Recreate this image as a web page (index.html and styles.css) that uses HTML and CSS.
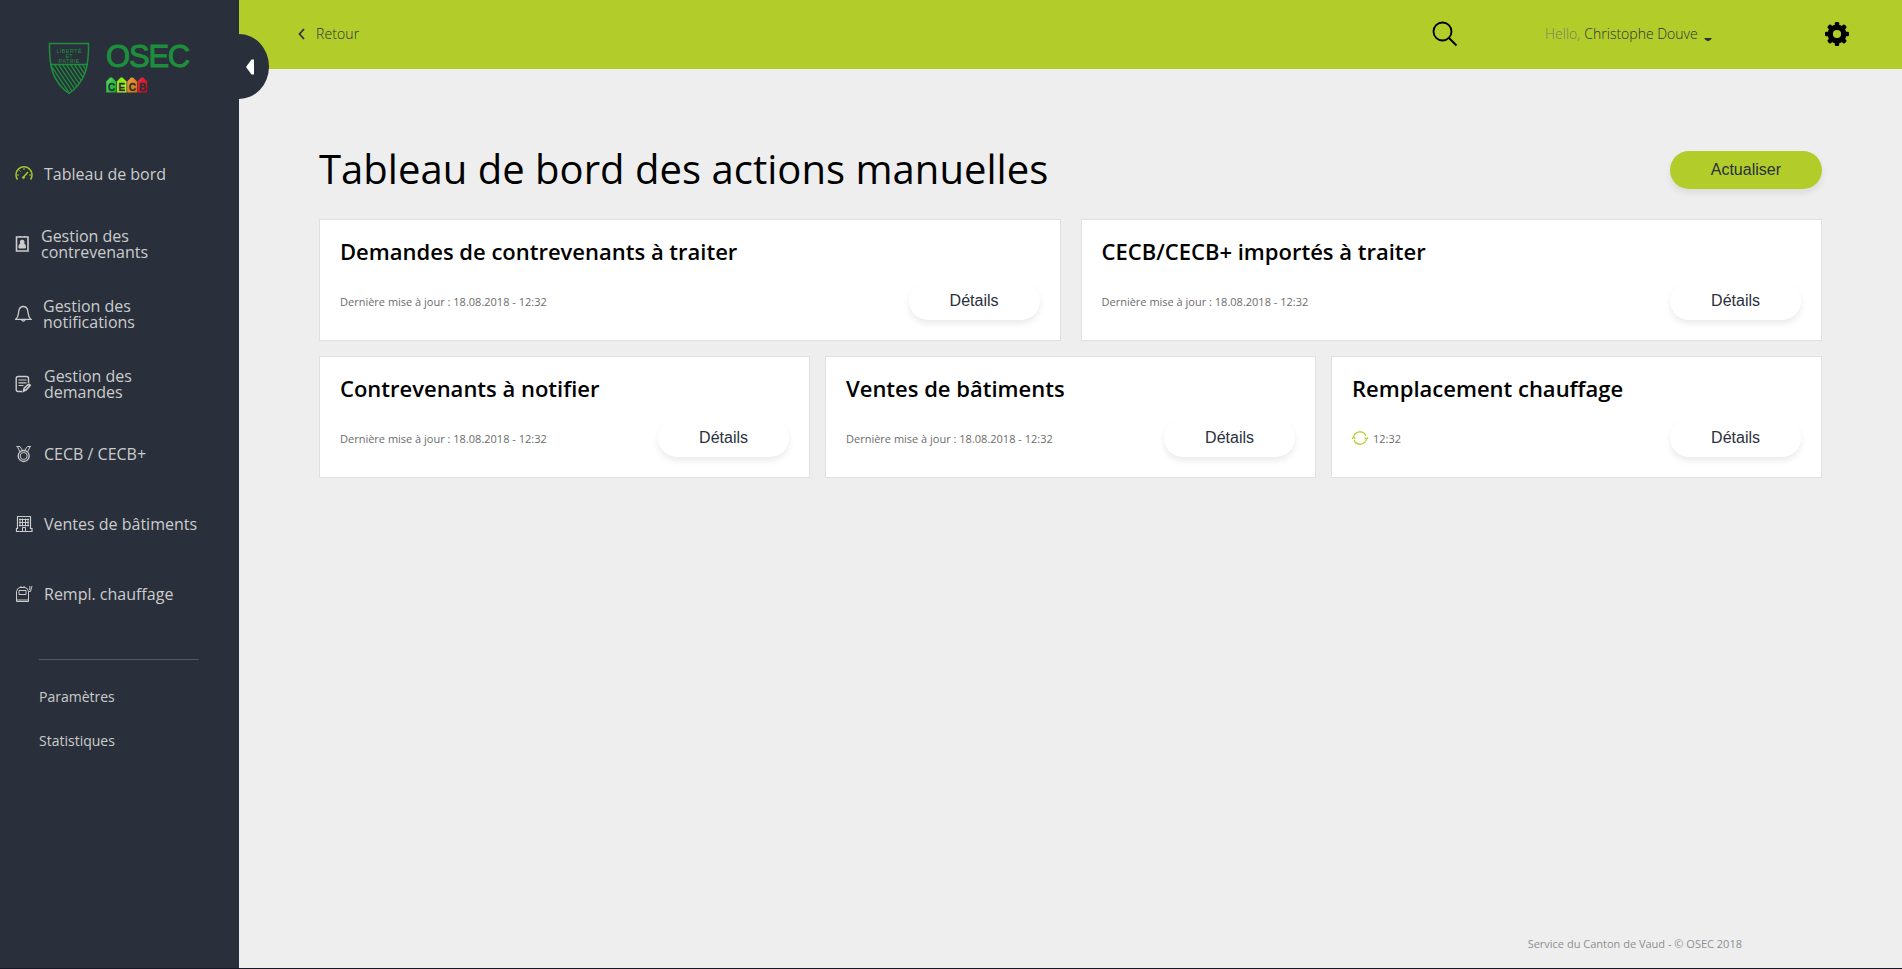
FILE: index.html
```html
<!DOCTYPE html>
<html lang="fr">
<head>
<meta charset="utf-8">
<title>OSEC - Tableau de bord</title>
<link rel="stylesheet" href="styles.css">
</head>
<body>
<div class="app">
  <aside class="sidebar">
    <div class="logo">
      <svg class="shield" width="42" height="54" viewBox="0 0 42 54">
        <defs><clipPath id="low"><path d="M2 22.500H40C38 35 31 44 21 51C11 44 4 35 2 22.500Z"/></clipPath></defs>
        <path d="M1.500 1.500H40.500C41 25 37 40 21 51.500C5 40 1 25 1.500 1.500ZM2 22.500H40" fill="none" stroke="#1d8f3c" stroke-width="1.500"/>
        <g clip-path="url(#low)" stroke="#1d8f3c" stroke-width="1.300"><path d="M-18 22l20 30M-14 22l20 30M-10 22l20 30M-6 22l20 30M-2 22l20 30M2 22l20 30M6 22l20 30M10 22l20 30M14 22l20 30M18 22l20 30M22 22l20 30M26 22l20 30M30 22l20 30M34 22l20 30"/></g>
        <g class="motto"><text x="21" y="10.500" textLength="25">LIBERTÉ</text><text x="21" y="15.500">ET</text><text x="21" y="20.500" textLength="21">PATRIE</text></g>
      </svg>
      <div class="brand">
        <div class="brand-name">OSEC</div>
        <svg class="cecb" width="42" height="16" viewBox="0 0 42 16">
          <defs>
            <linearGradient id="g1" x2="1" y2="1"><stop stop-color="#55e05f"/><stop offset="1" stop-color="#0da72b"/></linearGradient>
            <linearGradient id="g2" x2="1" y2="1"><stop stop-color="#79e413"/><stop offset="1" stop-color="#c5f42b"/></linearGradient>
            <linearGradient id="g3" x2="1" y2="1"><stop stop-color="#f0a044"/><stop offset="1" stop-color="#cc7100"/></linearGradient>
            <linearGradient id="g4" x2="1" y2="1"><stop stop-color="#f02b4b"/><stop offset="1" stop-color="#c20b12"/></linearGradient>
          </defs>
          <path fill="url(#g1)" d="M.3 15.500V4.500L4 .5h2l4 4v11z"/><path fill="url(#g2)" d="M10.800 15.500V4.500L14.500.5h2l4 4v11z"/><path fill="url(#g3)" d="M21.200 15.500V4.500L25 .5h2l4 4v11z"/><path fill="url(#g4)" d="M31.500 15.500V4.500L35.200.5h2l4 4v11z"/>
          <g class="cecb-text"><text x="5.500" y="14">C</text><text x="15.800" y="14">E</text><text x="26.300" y="14">C</text><text x="36.500" y="14">B</text></g>
        </svg>
      </div>
    </div>
    <nav class="menu">
      <a class="item active"><svg width="18" height="18" viewBox="0 0 18 18" fill="none" stroke="currentColor"><path d="M2.500 14.500A8 8 0 1 1 15.500 14.500" stroke-width="1.500"/><path d="M2 10h2M14 10h2M4.500 5.500l1 1M9 3v2" /><path d="M8.500 12l4.500-5" stroke-width="1.600"/><circle cx="8.500" cy="12.500" r="1" fill="currentColor"/></svg><span>Tableau de bord</span></a>
      <a class="item id"><svg width="15" height="18" viewBox="0 0 15 18" fill="none" stroke="currentColor"><path d="M1.500 2h11.500v14H1.500z" stroke-width="1.600"/><path d="M4 1.500h2M8.500 1.500h2"/><circle cx="7.200" cy="7" r="1.900" fill="currentColor"/><path d="M4 13c-.3-4 1-4.500 3.200-4.500s3.500.5 3.200 4.500z" fill="currentColor"/></svg><span>Gestion des contrevenants</span></a>
      <a class="item bell"><svg width="17" height="18" viewBox="0 0 17 18" fill="none" stroke="currentColor" stroke-width="1.300"><path d="M.8 14.300h15C13 12 13.500 10 12.800 6c-.5-3-2-4.500-4.500-4.500S4.300 3 3.800 6C3.100 10 3.600 12 .8 14.300zM6.500 14.500c.2 2 3.400 2 3.600 0"/></svg><span>Gestion des notifications</span></a>
      <a class="item doc"><svg width="18" height="18" viewBox="0 0 18 18" fill="none" stroke="currentColor"><path d="M7 16.500H3Q1.200 16.500 1.200 14.500V3.500Q1.200 1.500 3 1.500h8.500Q13.500 1.500 13.500 3.500V8" stroke-width="1.400"/><path d="M3.500 5h8M3.500 7.800h8M3.500 10.500h5" stroke-width="1.200"/><path d="M8.500 16.200l.7-3 4-3.700q1.300-.5 2 .8l-4 4.500z" stroke-width="1.700"/></svg><span>Gestion des demandes</span></a>
      <a class="item"><svg width="18" height="18" viewBox="0 0 18 18" fill="none" stroke="currentColor"><circle cx="8.700" cy="11" r="5.500" stroke-width="1.300"/><circle cx="8.700" cy="11" r="3.500"/><path d="M1.500 1.500H5L7.500 5.500M2.300 1.500L5 7M16 1.500H12.500L9 6M15.200 1.500L12.500 7"/></svg><span>CECB / CECB+</span></a>
      <a class="item"><svg width="18" height="18" viewBox="0 0 18 18" fill="none" stroke="currentColor"><path d="M2 1.500h14M2.500 1.500v12h-1v3h15.500v-3H15.500V1.500" stroke-width="1.200"/><path d="M5 3.500v8M7.500 3.500v8M10.500 3.500v8M13 3.500v8M4 4.500h10M4 7.500h10M4 10.500h10M7.500 16v-3.500h3V16"/></svg><span>Ventes de bâtiments</span></a>
      <a class="item"><svg width="18" height="18" viewBox="0 0 18 18" fill="none" stroke="currentColor"><path d="M1.500 16.500V6.500Q2 3 5 2.500h5Q13 3 13.500 6.500V16.500zM1.500 15h12M4 5.500h7V9.500H4zM6 1v2M9 1v2M13.500 6.500h2L17 1M14.800 5V1"/></svg><span>Rempl. chauffage</span></a>
    </nav>
    <div class="secondary"><a>Paramètres</a><a>Statistiques</a></div>
    <div class="collapse"><svg width="8" height="16" viewBox="0 0 8 16"><path d="M0 8L5.500.500H8v15H5.500z" fill="#fff"/></svg></div>
  </aside>
  <div class="page">
    <header class="topbar">
      <a class="back"><svg width="7" height="12" viewBox="0 0 7 12"><path d="M6 1L1.500 6 6 11" fill="none" stroke="#29303b" stroke-width="1.700"/></svg>Retour</a>
      <div class="tools">
        <svg class="search" width="26" height="26" viewBox="0 0 26 26" fill="none" stroke="#000"><circle cx="10.500" cy="10.500" r="9" stroke-width="1.900"/><path d="M17 17l7.500 7.500" stroke-width="2"/></svg>
        <div class="user"><span class="hello">Hello,</span> Christophe Douve<svg class="caret" width="8" height="4" viewBox="0 0 8 4"><path d="M0 0h8Q4 6.500 0 0z" fill="#29303b"/></svg></div>
        <svg class="gear" width="24" height="24" viewBox="0 0 24 24"><g fill="#000"><rect x="9.800" y="0" width="4.400" height="24" rx="1.200"/><rect x="9.800" width="4.400" height="24" rx="1.200" transform="rotate(45 12 12)"/><rect x="9.800" width="4.400" height="24" rx="1.200" transform="rotate(90 12 12)"/><rect x="9.800" width="4.400" height="24" rx="1.200" transform="rotate(135 12 12)"/><circle cx="12" cy="12" r="9.500"/></g><circle cx="12" cy="12" r="4.100" fill="#b2cd2a"/></svg>
      </div>
    </header>
    <main class="content">
      <div class="heading"><h1>Tableau de bord des actions manuelles</h1><button class="btn primary">Actualiser</button></div>
      <section class="row two">
        <article class="card"><h2>Demandes de contrevenants à traiter</h2><div class="foot"><span>Dernière mise à jour : 18.08.2018 - 12:32</span><button class="btn">Détails</button></div></article>
        <article class="card"><h2>CECB/CECB+ importés à traiter</h2><div class="foot"><span>Dernière mise à jour : 18.08.2018 - 12:32</span><button class="btn">Détails</button></div></article>
      </section>
      <section class="row three">
        <article class="card"><h2>Contrevenants à notifier</h2><div class="foot"><span>Dernière mise à jour : 18.08.2018 - 12:32</span><button class="btn">Détails</button></div></article>
        <article class="card"><h2>Ventes de bâtiments</h2><div class="foot"><span>Dernière mise à jour : 18.08.2018 - 12:32</span><button class="btn">Détails</button></div></article>
        <article class="card"><h2>Remplacement chauffage</h2><div class="foot"><span class="sync"><svg width="16" height="16" viewBox="0 0 16 16" fill="none" stroke="#b2cd2a" stroke-width="1.200"><path d="M1.500 7.500A6.500 6.500 0 0 1 14 6M14.500 8.500A6.500 6.500 0 0 1 2 10M0 9l1.500-2L3.300 8.700M12.500 7.300l2 2L16 7.200"/></svg>12:32</span><button class="btn">Détails</button></div></article>
      </section>
    </main>
    <footer class="footer">Service du Canton de Vaud - © OSEC 2018</footer>
  </div>
</div>
</body>
</html>
```
FILE: styles.css
```css
* { box-sizing: border-box; }
body { margin: 0; font-family: "Open Sans", sans-serif; background: #eee; color: #000; }
.app { display: flex; height: 969px; border-bottom: 1px solid #161827; overflow: hidden; }
.sidebar { position: relative; width: 239px; flex: none; background: #29303b; color: #ccc; }
.logo { display: flex; height: 139px; padding: 42px 0 0 48px; }
.shield { flex: none; }
.motto { font: 5.500px "Liberation Sans", sans-serif; fill: #1d8f3c; text-anchor: middle; }
.brand { padding-left: 16px; }
.brand-name { font: 31px/29px "Liberation Sans", sans-serif; color: #1d8f3c; -webkit-text-stroke: 1px #1d8f3c; height: 35px; letter-spacing: -1.200px; }
.cecb { display: block; }
.cecb-text { font: bold 10px "Liberation Sans", sans-serif; fill: #29303b; stroke: #29303b; stroke-width: .3px; text-anchor: middle; }
.menu { display: flex; flex-direction: column; }
.item { display: flex; align-items: center; height: 70px; padding-left: 15px; gap: 11px; font-size: 16px; line-height: 16px; }
.item svg { flex: none; }
.item span { width: 165px; }
.item.id span, .item.bell span, .item.doc span { width: 120px; }
.item.active svg { color: #a5c824; }
.secondary { display: flex; flex-direction: column; gap: 24px; width: 160px; margin: 30px 0 0 39px; padding-top: 27px; border-top: 1px solid #55585d; font-size: 14px; line-height: 20px; }
.collapse { position: absolute; left: 239px; top: 34px; width: 30px; height: 65px; border-radius: 0 30px 30px 0 / 0 32.500px 32.500px 0; background: #29303b; display: flex; align-items: center; padding-left: 7px; }
.page { flex: 1; display: flex; flex-direction: column; }
.topbar { display: flex; justify-content: space-between; align-items: center; height: 69px; background: #b2cd2a; padding: 0 53px 1px 59px; }
.back { display: flex; align-items: center; gap: 11px; font-size: 14px; font-weight: 300; line-height: 20px; letter-spacing: .1px; color: #29303b; }
.tools { display: flex; align-items: center; }
.user { display: flex; align-items: center; width: 280px; margin-left: 87px; gap: 4px; font-size: 14px; font-weight: 300; line-height: 20px; color: #29303b; }
.hello { color: #7c8060; }
.caret { margin: 11px 0 0 2px; }
.content { flex: 1; padding: 64px 80px 0; }
.heading { display: flex; justify-content: space-between; align-items: center; height: 74px; margin-bottom: 12px; }
h1 { margin: 0 0 2px; font-size: 40px; font-weight: 400; line-height: 54px; letter-spacing: .03px; }
.row { display: grid; margin-bottom: 15px; }
.two { grid-template-columns: repeat(2, 1fr); gap: 20px; }
.three { grid-template-columns: repeat(3, 1fr); gap: 15px; }
.card { height: 122px; padding: 16px 20px; background: #fff; border: 1px solid #e0e0e0; }
h2 { margin: 0; font-size: 22px; font-weight: 600; line-height: 30px; }
.foot { display: flex; align-items: center; justify-content: space-between; margin-top: 16px; font-size: 11px; color: #6c6c6c; }
.sync { display: flex; align-items: center; gap: 5px; }
.btn { height: 38px; padding: 0 41px; border: 0; border-radius: 19px; background: #fff; color: #29303b; font: 16px "Liberation Sans", sans-serif; box-shadow: 0 4px 6px rgba(0,0,0,.08); }
.primary { background: #b2cd2a; }
.footer { align-self: flex-end; margin: 0 160px 16px 0; font-size: 11px; line-height: 16px; color: #8c8f92; }
```
